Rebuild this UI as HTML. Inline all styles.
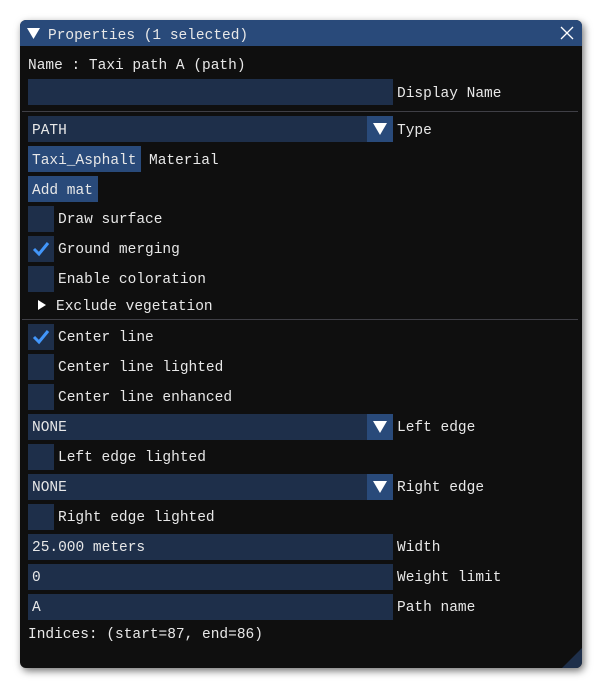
<!DOCTYPE html><html><head><style>
body{margin:0;width:602px;height:689px;background:#fff;position:relative;overflow:hidden;font-family:"Liberation Mono",monospace;font-size:14.5px;color:#e8e8e8}
.win{position:absolute;left:20px;top:20px;width:562px;height:648px;background:#0f0f0f;border-radius:6px;box-shadow:2px 3px 8px rgba(0,0,0,.55);overflow:hidden}
.title{position:absolute;left:0;top:0;width:562px;height:26px;background:#294a7a}
.a{position:absolute;white-space:pre;line-height:18px;margin-top:1.5px}
.f{position:absolute;background:#1e2f4a;height:26px}
.b{position:absolute;background:#294a7a;height:26px}
.sep{position:absolute;left:2px;width:556px;height:1px;background:#3f3f46}
.cb{position:absolute;left:8px;width:26px;height:26px;background:#1e2f4a}
</style></head><body>
<div class="win">
<div class="title"></div>
<svg style="position:absolute;left:7px;top:8px" width="13" height="12"><polygon points="0,0 13,0 6.5,11" fill="#fff"/></svg>
<div class="a" style="left:28px;top:5px">Properties (1 selected)</div>
<svg style="position:absolute;left:540px;top:6px" width="14" height="14"><path d="M1 1L13 13M13 1L1 13" stroke="#fff" stroke-width="1.3"/></svg>
<div class="a" style="left:8px;top:35px">Name : Taxi path A (path)</div>
<div class="f" style="left:8px;top:59px;width:365px"></div><div class="a" style="left:377px;top:63px">Display Name</div>
<div class="sep" style="top:91px"></div>
<div class="f" style="left:8px;top:96px;width:339px"></div><div class="b" style="left:347px;top:96px;width:26px"></div>
<svg style="position:absolute;left:353px;top:103px" width="14" height="12"><polygon points="0,0 14,0 7,12" fill="#fff"/></svg>
<div class="a" style="left:12px;top:100px">PATH</div><div class="a" style="left:377px;top:100px">Type</div>
<div class="b" style="left:8px;top:126px;width:113px"></div><div class="a" style="left:12px;top:130px">Taxi_Asphalt</div><div class="a" style="left:129px;top:130px">Material</div>
<div class="b" style="left:8px;top:156px;width:70px"></div><div class="a" style="left:12px;top:160px">Add mat</div>
<div class="cb" style="top:186px"></div><div class="a" style="left:38px;top:189px">Draw surface</div>
<div class="cb" style="top:216px"></div><svg style="position:absolute;left:12px;top:221px" width="18" height="16"><path d="M2 8L7 13L16 2" stroke="#4296fa" stroke-width="3" fill="none"/></svg><div class="a" style="left:38px;top:219px">Ground merging</div>
<div class="cb" style="top:246px"></div><div class="a" style="left:38px;top:249px">Enable coloration</div>
<svg style="position:absolute;left:18px;top:280px" width="9" height="10"><polygon points="0,0 8,5 0,10" fill="#fff"/></svg><div class="a" style="left:36px;top:276px">Exclude vegetation</div>
<div class="sep" style="top:299px"></div>
<div class="cb" style="top:304px"></div><svg style="position:absolute;left:12px;top:309px" width="18" height="16"><path d="M2 8L7 13L16 2" stroke="#4296fa" stroke-width="3" fill="none"/></svg><div class="a" style="left:38px;top:307px">Center line</div>
<div class="cb" style="top:334px"></div><div class="a" style="left:38px;top:337px">Center line lighted</div>
<div class="cb" style="top:364px"></div><div class="a" style="left:38px;top:367px">Center line enhanced</div>
<div class="f" style="left:8px;top:394px;width:339px"></div><div class="b" style="left:347px;top:394px;width:26px"></div>
<svg style="position:absolute;left:353px;top:401px" width="14" height="12"><polygon points="0,0 14,0 7,12" fill="#fff"/></svg>
<div class="a" style="left:12px;top:397px">NONE</div><div class="a" style="left:377px;top:397px">Left edge</div>
<div class="cb" style="top:424px"></div><div class="a" style="left:38px;top:427px">Left edge lighted</div>
<div class="f" style="left:8px;top:454px;width:339px"></div><div class="b" style="left:347px;top:454px;width:26px"></div>
<svg style="position:absolute;left:353px;top:461px" width="14" height="12"><polygon points="0,0 14,0 7,12" fill="#fff"/></svg>
<div class="a" style="left:12px;top:457px">NONE</div><div class="a" style="left:377px;top:457px">Right edge</div>
<div class="cb" style="top:484px"></div><div class="a" style="left:38px;top:487px">Right edge lighted</div>
<div class="f" style="left:8px;top:514px;width:365px"></div><div class="a" style="left:12px;top:517px">25.000 meters</div><div class="a" style="left:377px;top:517px">Width</div>
<div class="f" style="left:8px;top:544px;width:365px"></div><div class="a" style="left:12px;top:547px">0</div><div class="a" style="left:377px;top:547px">Weight limit</div>
<div class="f" style="left:8px;top:574px;width:365px"></div><div class="a" style="left:12px;top:577px">A</div><div class="a" style="left:377px;top:577px">Path name</div>
<div class="a" style="left:8px;top:604px">Indices: (start=87, end=86)</div>
<svg style="position:absolute;left:542px;top:628px" width="20" height="20"><polygon points="20,0 20,20 0,20" fill="#1e2f4a"/></svg>
</div>
</body></html>
